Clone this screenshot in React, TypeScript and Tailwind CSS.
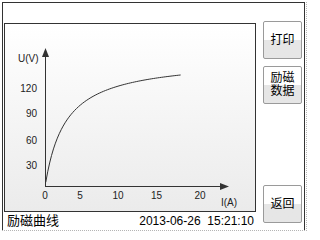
import React from 'react'

// 励磁曲线: U = 155 * I / (2.6 + I)
const toX = (i: number) => 45 + i * 7.75
const toY = (u: number) => 187 - u * 0.83

const curvePath = () => {
  const pts: string[] = []
  for (let k = 0; k <= 70; k++) {
    const i = 0.1 + (17.4 * k) / 70
    const u = (155 * i) / (2.6 + i)
    pts.push(`${k === 0 ? 'M' : 'L'}${toX(i).toFixed(2)},${toY(u).toFixed(2)}`)
  }
  return pts.join(' ')
}

const yLabels = [
  { t: '120', y: 92 },
  { t: '90', y: 117 },
  { t: '60', y: 144 },
  { t: '30', y: 169 },
]

const xLabels = [
  { t: '0', x: 45 },
  { t: '5', x: 80 },
  { t: '10', x: 118 },
  { t: '15', x: 156.5 },
  { t: '20', x: 200 },
]

function Chart() {
  return (
    <div className="w-[252px] h-[189px] border border-[#333] bg-gradient-to-b from-white to-[#ebebeb]">
      <svg width={250} height={187} viewBox="5 24 250 187" className="block">
        <g fontFamily="'Liberation Sans', Arial, sans-serif" fontSize={10} fill="#222">
          <text x={18} y={62}>U(V)</text>
          {yLabels.map((l) => (
            <text key={l.t} x={37} y={l.y} textAnchor="end">
              {l.t}
            </text>
          ))}
          {xLabels.map((l) => (
            <text key={l.t} x={l.x} y={199} textAnchor="middle">
              {l.t}
            </text>
          ))}
          <text x={221} y={206}>I(A)</text>
        </g>
        {/* axes */}
        <line x1={45.5} y1={55} x2={45.5} y2={187} stroke="#333" strokeWidth={1} />
        <polygon points="45.5,48 42,57 49,57" fill="#333" />
        <line x1={45} y1={186.5} x2={222} y2={186.5} stroke="#333" strokeWidth={1} />
        <polygon points="229,186.5 220,183 220,190" fill="#333" />
        <path d={curvePath()} fill="none" stroke="#333" strokeWidth={1} />
      </svg>
    </div>
  )
}

function SideButton({ children, className = '' }: { children: React.ReactNode; className?: string }) {
  return (
    <button
      className={`w-[39px] h-[38px] rounded-[2px] border border-[#9a9a9a] bg-gradient-to-b from-white from-50% to-[#e6e6e6] to-50% flex flex-col items-center justify-center text-[12px] leading-[13px] text-black ${className}`}
    >
      {children}
    </button>
  )
}

export default function App() {
  return (
    <div
      className="w-[309px] h-[233px] bg-white pl-[2px] pt-[2px] overflow-hidden"
      style={{ fontFamily: "'Liberation Sans', 'Noto Sans CJK SC', sans-serif" }}
    >
      <div className="w-[305px] h-[229px] border-r border-b border-dotted border-[#b5b5b5]">
        <div className="w-[303px] h-[228px] border-l border-t border-r border-[#333] flex">
          {/* 左侧: 曲线 + 状态栏 */}
          <div className="pl-[1px] pt-[20px] flex flex-col">
            <Chart />
            <div className="h-[17px] flex items-center justify-between pl-[3px] pr-[2px]">
              <span className="text-[13px] leading-none text-black">励磁曲线</span>
              <span className="text-[12px] leading-none text-black">2013-06-26&nbsp;&nbsp;15:21:10</span>
            </div>
          </div>

          {/* 右侧按钮 */}
          <div className="ml-[7px] pt-[18px] pb-[7px] flex flex-col">
            <SideButton>打印</SideButton>
            <SideButton className="mt-[7px]">
              <span>励磁</span>
              <span>数据</span>
            </SideButton>
            <SideButton className="mt-auto">返回</SideButton>
          </div>
        </div>
      </div>
    </div>
  )
}
